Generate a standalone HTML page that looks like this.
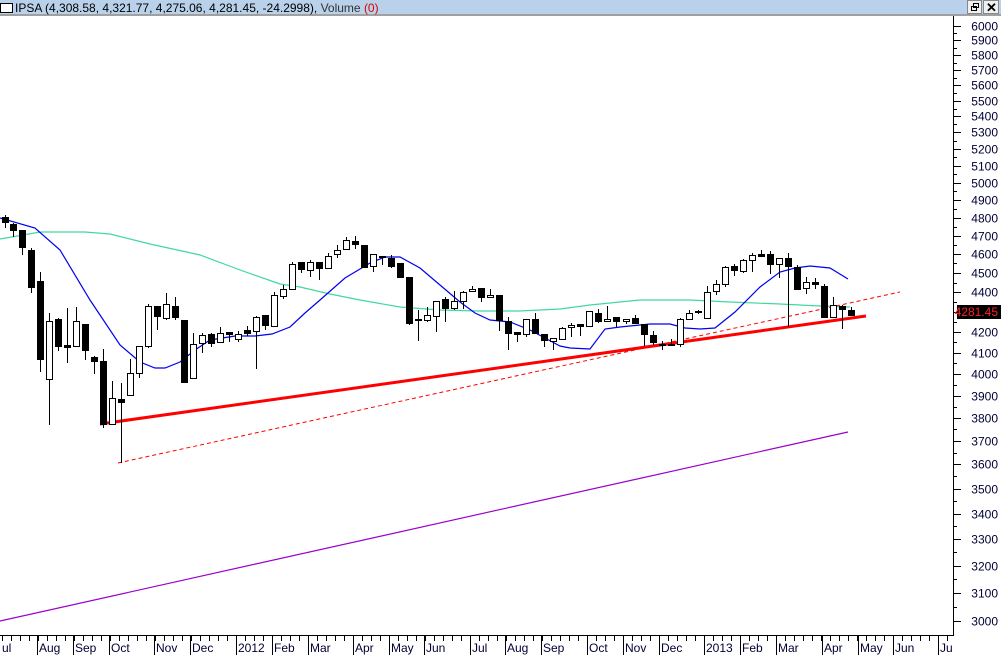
<!DOCTYPE html>
<html><head><meta charset="utf-8"><style>
html,body{margin:0;padding:0;background:#fff;overflow:hidden}
body{width:1001px;height:655px;position:relative;font-family:"Liberation Sans",Arial,sans-serif}
</style></head><body>
<svg id="s" width="1001" height="655" viewBox="0 0 1001 655" xmlns="http://www.w3.org/2000/svg" style="position:absolute;left:0;top:0" shape-rendering="crispEdges">
<rect x="0" y="0" width="1001" height="14" fill="#b9d1ea"/>
<rect x="0" y="14" width="1001" height="2" fill="#a0a0a0"/>
<rect x="0.5" y="3.5" width="12" height="9" fill="#fff" stroke="#000"/>
<text x="15" y="12" font-size="12" fill="#000" shape-rendering="auto">IPSA (4,308.58, 4,321.77, 4,275.06, 4,281.45, -24.2998), <tspan fill="#333">Volume </tspan><tspan fill="#e00000">(0)</tspan></text>
<rect x="967.5" y="0.5" width="14" height="13" fill="#f0f0f0" stroke="#888"/>
<rect x="971.5" y="6.5" width="5" height="4" fill="none" stroke="#000"/>
<rect x="973.5" y="3.5" width="5" height="4" fill="none" stroke="#000"/>
<rect x="983.5" y="0.5" width="15" height="13" fill="#f0f0f0" stroke="#888"/>
<text x="986" y="12" font-size="13" font-weight="bold" fill="#000" shape-rendering="auto">✕</text>
<g id="g"></g>
</svg>
<script>
var g=document.getElementById('g'),h='';
function L(x1,y1,x2,y2,c,w,d){h+='<line x1="'+x1+'" y1="'+y1+'" x2="'+x2+'" y2="'+y2+'" stroke="'+c+'" stroke-width="'+(w||1)+'"'+(d?' stroke-dasharray="'+d+'"':'')+'/>';}
function P(pts,c,w,d){h+='<polyline fill="none" shape-rendering="auto" stroke="'+c+'" stroke-width="'+w+'"'+(d?' stroke-dasharray="'+d+'"':'')+' points="'+pts+'"/>';}
function Y(v){return 26+858.4*Math.log(6000/v);}
// right axis
L(953.5,16,953.5,636,'#000');
for(var v=6000;v>=3000;v-=100){var y=Math.round(Y(v))+0.5;L(953,y,961,y,'#000');
h+='<text x="998" y="'+(y+4)+'" font-size="12" text-anchor="end" fill="#000033" shape-rendering="auto">'+v+'</text>';}
for(var v=5950;v>3000;v-=100){var y=Math.round(Y(v))+0.5;L(953,y,957,y,'#000');}
// bottom axis
L(0,635.5,953,635.5,'#000');
for(var x=2;x<953;x+=9){L(x+0.5,636,x+0.5,641,'#000');}
var m=[[0,'ul'],[37,'Aug'],[73,'Sep'],[109,'Oct'],[154,'Nov'],[190,'Dec'],[236,'2012'],[272,'Feb'],[308,'Mar'],[353,'Apr'],[389,'May'],[424,'Jun'],[470,'Jul'],[505,'Aug'],[541,'Sep'],[587,'Oct'],[623,'Nov'],[659,'Dec'],[704,'2013'],[740,'Feb'],[776,'Mar'],[822,'Apr'],[858,'May'],[893,'Jun'],[938,'Ju']];
m.forEach(function(a){if(a[0]>0)L(a[0]+0.5,636,a[0]+0.5,655,'#000');h+='<text x="'+(a[0]+2)+'" y="652" font-size="12" fill="#000033" shape-rendering="auto">'+a[1]+'</text>';});
// MAs
P('0,621 848,432','#9900cc',1.2);
P('0,239 40,232 85,232 110,234 150,244 200,255 240,270 280,284 300,287 330,294 360,300 400,307 440,310 480,311 520,311 560,309 590,305 640,300 690,300 730,302 780,304 820,306 850,307','#40d8a0',1.2);
P('0,218 35,228 60,250 90,300 120,345 140,362 155,368 165,368 180,362 195,350 210,340 235,336 255,336 272,334 290,327 305,313 320,300 345,278 370,263 385,257 400,257 420,268 440,285 460,302 475,313 490,320 510,322 530,330 545,338 560,346 570,348 590,349 605,329 620,327 650,324 670,324 685,328 700,329 715,328 735,312 760,287 780,272 795,268 810,266 830,268 848,279','#0000ee',1.2);
P('118,463 900,292','#ff0000',1,'4,3');
P('100,424 866,316','#ff0000',3);
var c=[[2,215,228,217,222,1],[10,223,237,224,230,1],[19,230,255,230,247,1],[28,248,293,250,287,1],[37,272,372,281,359,1],[46,313,425,321,379,0],[55,318,351,319,346,1],[64,308,363,345,347,1],[73,307,346,321,346,0],[82,324,360,324,350,1],[91,356,374,357,361,1],[100,349,428,361,424,1],[109,381,424,398,424,0],[118,383,463,399,402,1],[127,359,395,373,395,0],[136,346,378,346,373,0],[145,304,348,306,346,0],[154,306,330,306,316,1],[163,293,320,304,318,0],[172,297,320,306,317,1],[181,320,382,320,382,1],[190,333,378,344,378,0],[199,333,353,335,343,0],[208,333,347,334,343,1],[217,327,343,333,342,0],[226,332,342,332,334,1],[235,331,342,334,339,0],[244,326,336,330,333,1],[253,316,369,317,331,0],[262,315,330,315,325,1],[271,292,326,295,326,0],[280,285,299,289,296,0],[289,262,289,264,289,0],[298,262,273,262,269,1],[307,260,277,262,270,0],[316,262,280,262,268,1],[325,253,269,256,268,0],[334,245,258,250,254,0],[343,237,249,240,249,0],[352,236,249,241,244,1],[361,245,267,245,267,1],[370,254,272,254,266,0],[379,256,265,256,257,1],[388,255,268,258,266,1],[397,263,278,263,277,1],[406,277,325,277,323,1],[415,310,341,319,320,1],[424,307,322,315,320,0],[433,301,332,301,316,0],[442,297,322,299,308,1],[451,291,310,301,308,0],[460,291,309,292,301,0],[469,286,291,289,291,0],[478,288,302,288,297,1],[487,289,298,295,297,0],[496,295,331,295,320,1],[505,317,350,321,333,1],[514,332,342,332,334,1],[523,319,337,319,334,0],[532,313,333,319,333,1],[541,334,347,334,340,1],[550,338,350,338,341,0],[559,327,339,328,339,0],[568,323,337,325,327,0],[577,324,336,324,326,1],[586,311,327,311,326,0],[595,309,323,313,321,1],[604,306,321,319,321,0],[613,317,327,317,321,1],[623,319,324,319,321,0],[632,315,324,318,323,1],[641,324,346,324,334,1],[650,331,345,335,342,1],[659,341,350,344,345,1],[668,339,346,344,345,1],[677,318,347,319,344,0],[686,310,319,313,319,0],[695,310,314,311,312,1],[704,286,318,292,318,0],[713,280,295,284,291,0],[722,266,287,267,284,0],[731,264,276,266,270,1],[740,259,273,260,271,0],[749,253,272,255,260,0],[758,250,257,254,256,1],[767,251,274,254,264,1],[776,258,278,258,264,0],[785,253,327,258,266,1],[794,265,289,267,289,1],[803,277,294,282,288,0],[812,278,289,282,284,1],[821,284,317,286,317,1],[830,297,317,305,317,0],[839,305,329,306,309,1],[848,307,316,310,315,1]];
c.forEach(function(k){var x=k[0]+3.5;L(x,k[1],x,k[2],'#000');
var bh=Math.max(k[4]-k[3],1);
if(k[5])h+='<rect x="'+(k[0])+'" y="'+k[3]+'" width="7" height="'+(bh+1)+'" fill="#000"/>';
else h+='<rect x="'+(k[0]+0.5)+'" y="'+(k[3]+0.5)+'" width="6" height="'+bh+'" fill="#fff" stroke="#000"/>';});
h+='<rect x="957" y="305" width="44" height="14" fill="#000"/><text x="998" y="316" font-size="12" text-anchor="end" fill="#ff2020" shape-rendering="auto">4281.45</text>';
g.innerHTML=h;
</script>
</body></html>
